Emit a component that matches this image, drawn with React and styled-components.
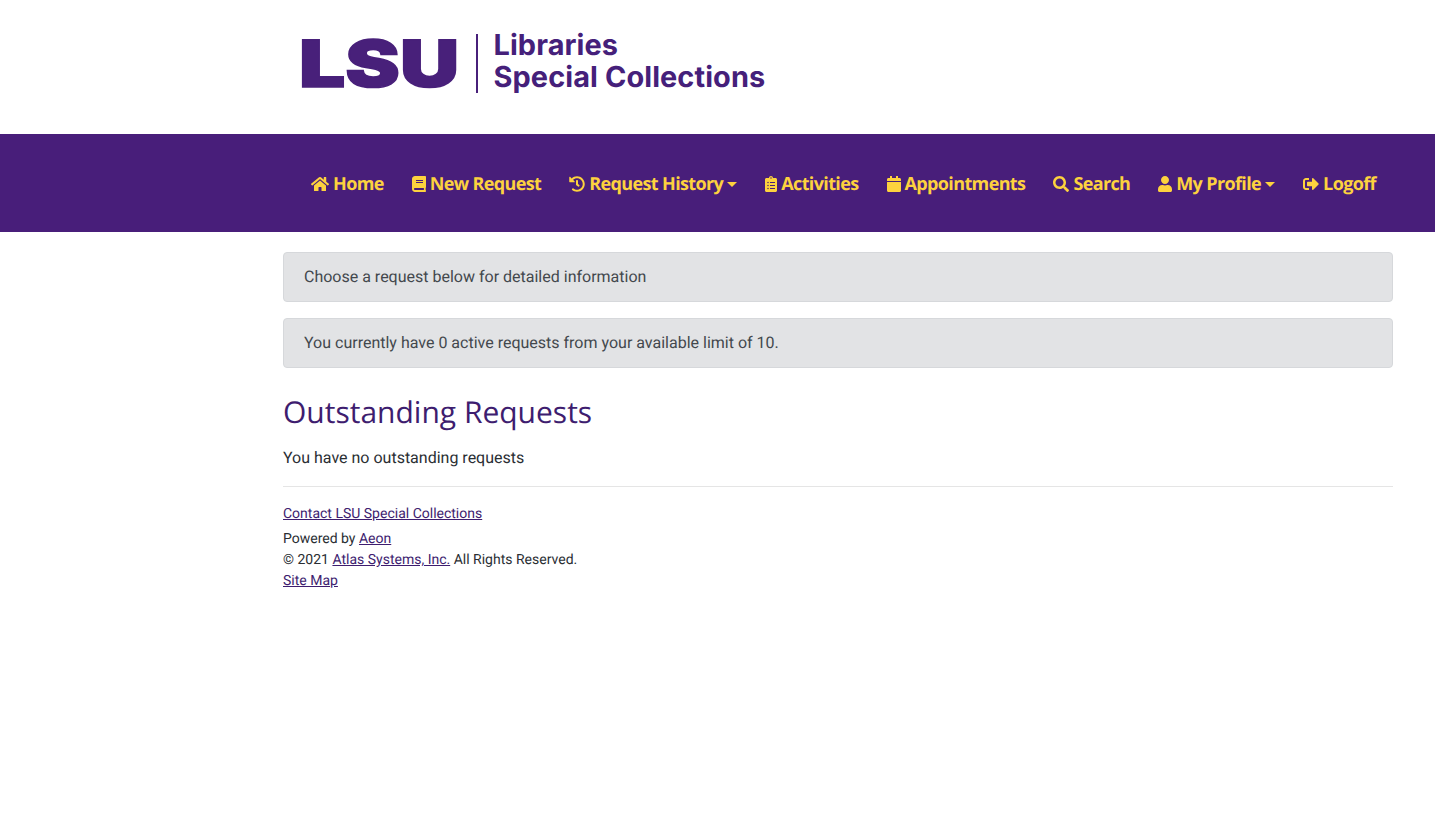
import React from "react";
import styled, { createGlobalStyle } from "styled-components";
import { FaHome, FaBook, FaHistory, FaClipboardList, FaCalendar, FaSearch, FaUser, FaSignOutAlt } from "react-icons/fa";

const Global = createGlobalStyle`
  html, body { margin: 0; padding: 0; background: #fff; }
  body { font-family: Roboto, "Liberation Sans", sans-serif; font-size: 16px; line-height: 1.5; color: #2a2e33; text-rendering: geometricPrecision; }
`;

const Header = styled.header`
  height: 134px;
  display: flex;
  align-items: flex-start;
  padding: 27px 0 0 302px;
  box-sizing: border-box;
`;

const LogoMark = styled.svg`
  width: 155px;
  height: 66px;
  flex: none;
  overflow: visible;
`;

const LogoDivider = styled.div`
  width: 1.5px;
  height: 59px;
  background: #48207a;
  margin: 7px 17px 0 19px;
`;

const LogoText = styled.div`
  font-family: Inter, "Open Sans", sans-serif;
  font-weight: 700;
  font-size: 28.9px;
  line-height: 32px;
  letter-spacing: 0.1px;
  color: #45207a;
  margin-top: 2px;
  margin-left: -1px;
`;

const Nav = styled.nav`
  height: 98px;
  background: #481e7a;
  display: flex;
  align-items: center;
  padding-left: 311px;
  gap: 28px;
`;

const NavItem = styled.a`
  display: flex;
  align-items: center;
  gap: 4px;
  padding-top: 2px;
  font-family: "Open Sans", sans-serif;
  font-weight: 700;
  font-size: 18px;
  letter-spacing: -0.63px;
  color: #fdd23e;
  white-space: nowrap;
  svg {
    flex: none;
    width: ${(p) => p.$iconWidth}px;
    height: 16px;
  }
`;

const Caret = styled.span`
  width: 0;
  height: 0;
  border-top: 5px solid #fdd23e;
  border-left: 5.5px solid transparent;
  border-right: 5.5px solid transparent;
`;

const Main = styled.main`
  width: 1110px;
  margin-left: 283px;
  padding-top: 20px;
`;

const Alert = styled.div`
  box-sizing: border-box;
  height: 50px;
  padding: 12px 20px;
  margin-bottom: 16px;
  background: #e2e3e5;
  border: 1px solid #d6d8db;
  border-radius: 4px;
  color: #43484d;
`;

const Title = styled.h2`
  margin: 26px 0 8px;
  font-family: "Open Sans", sans-serif;
  font-weight: 400;
  font-size: 30px;
  line-height: 36px;
  color: #3e1d6f;
`;

const Paragraph = styled.p`
  margin: 16px 0 16px;
`;

const Rule = styled.hr`
  border: 0;
  border-top: 1px solid rgba(0, 0, 0, 0.1);
  margin: 16px 0 17px;
`;

const Footer = styled.footer`
  font-size: 14px;
  line-height: 21px;
`;

const Contact = styled.div`
  margin-bottom: 4px;
`;

const Link = styled.a`
  color: #3e1d6f;
  text-decoration: underline;
`;

const items = [
  [FaHome, 18, "Home"],
  [FaBook, 14, "New Request"],
  [FaHistory, 16, "Request History", true],
  [FaClipboardList, 12, "Activities"],
  [FaCalendar, 14, "Appointments"],
  [FaSearch, 16, "Search"],
  [FaUser, 14, "My Profile", true],
  [FaSignOutAlt, 16, "Logoff"],
];

export default function App() {
  return (
    <>
      <Global />
      <Header>
        <LogoMark viewBox="0 0 155 66" aria-label="LSU">
          <text
            x="-3"
            y="60"
            textLength="160"
            lengthAdjust="spacingAndGlyphs"
            fontFamily="Inter, sans-serif"
            fontWeight="900"
            fontSize="65"
            fill="#48207a"
            stroke="#48207a"
            strokeWidth="1.5"
            strokeLinejoin="miter"
          >
            LSU
          </text>
        </LogoMark>
        <LogoDivider />
        <LogoText>
          Libraries
          <br />
          Special Collections
        </LogoText>
      </Header>
      <Nav>
        {items.map(([Icon, width, label, caret]) => (
          <NavItem key={label} $iconWidth={width}>
            <Icon />
            {label}
            {caret && <Caret />}
          </NavItem>
        ))}
      </Nav>
      <Main>
        <Alert>Choose a request below for detailed information</Alert>
        <Alert>You currently have 0 active requests from your available limit of 10.</Alert>
        <Title>Outstanding Requests</Title>
        <Paragraph>You have no outstanding requests</Paragraph>
        <Rule />
        <Footer>
          <Contact>
            <Link>Contact LSU Special Collections</Link>
          </Contact>
          <div>
            Powered by <Link>Aeon</Link>
          </div>
          <div>
            © 2021 <Link>Atlas Systems, Inc.</Link> All Rights Reserved.
          </div>
          <div>
            <Link>Site Map</Link>
          </div>
        </Footer>
      </Main>
    </>
  );
}
